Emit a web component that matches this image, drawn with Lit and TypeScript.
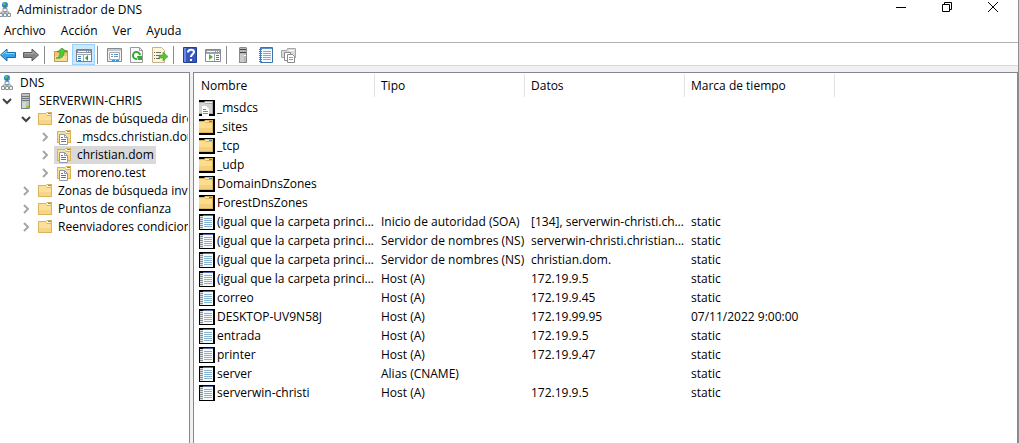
import { LitElement, html, css, svg, nothing } from "lit";
import { customElement } from "lit/decorators.js";
import { classMap } from "lit/directives/class-map.js";

const folderShape = svg`
  <path d="M1 2h8l1-1h5v13H1z" fill="#d9b45e"/>
  <path d="M2 3h7l1 2h4v8H2z" fill="#fbe09a"/>
  <path d="M2 9h12v4H2z" fill="#f6d589"/>
  <path d="M9 2h5v2h-4z" fill="#fff8e4"/>
  <path d="M11 2h3v1h-3z" fill="#4f97d4"/>`;

const icons: Record<string, unknown> = {
  dns: svg`
    <circle cx="8" cy="3" r="3" fill="#2c78c8"/>
    <path d="M6 1l2-1 1 2-2 2-1-1zM9 4l2-2v2l-1 1z" fill="#45c95a"/>
    <path d="M6 6.500h4v3H6zM2.500 11.500h3v3h-3zM6.500 11.500h3v3h-3zM10.500 11.500h3v3h-3z" fill="#f4f6f8" stroke="#8c949c"/>
    <path d="M8 9v2M4 11v-1h8v1" stroke="#8c949c" fill="none"/>`,
  server: svg`
    <path d="M3 1l1-1h8v15l-1 1H3z" fill="#7d8286"/>
    <path d="M4 1h7v14H4z" fill="#bfc3c6"/>
    <path d="M4 3.500h7M4 5.500h7M4 7.500h7" stroke="#74797d"/>
    <path d="M4 9h4v6H4z" fill="#d2d6d8"/>
    <path d="M8 13h3v2H8z" fill="#7ed321"/>`,
  tower: svg`
    <path d="M4 1l1-1h6l1 1v15H4z" fill="#8a8a8a"/>
    <path d="M5 1h6v14H5z" fill="#b8b8b8"/>
    <path d="M5 2h6v1H5zM5 5h6v1H5z" fill="#444"/>
    <path d="M5 7h4v8H5z" fill="#cacaca"/><path d="M9 8h2v1H9z" fill="#fff"/>`,
  folder: folderShape,
  zone: svg`${folderShape}<path d="M3.500 5.500h5l3 3v7h-8z" fill="#fff" stroke="#8c9cac"/><path d="M8.500 5.500v3h3" fill="none" stroke="#8c9cac"/><path d="M5 8.500h2M5 10.500h5M5 12.500h5" stroke="#3d7cc4"/>`,
  rowFolder: svg`<path d="M0 0h16v16H0z" fill="#000"/>
    <path d="M0 2h5l1-1h8v13H0z" fill="#dcb45c"/><path d="M0 3h6l1 1h6v9H0z" fill="#fbdd8d"/>
    <path d="M0 9h13v4H0z" fill="#f4d07c"/><path d="M6 2h7v1H6z" fill="#f8eac4"/><path d="M10 2h3v1h-3z" fill="#398bd0"/>`,
  rowZone: svg`<path d="M0 0h16v16H0z" fill="#000"/>
    <path d="M0 2h5l1-1h8v13H0z" fill="#aaa"/><path d="M0 3h6l1 1h6v9H0z" fill="#d2d2d2"/><path d="M6 2h7v1H6z" fill="#f2f2f2"/>
    <path d="M3 6h4l3 3v7H3z" fill="#fff"/><path d="M4 9.500h3M4 11.500h5M4 13.500h5" stroke="#888"/>`,
  rowRecord: svg`<path d="M0 0h16v16H0z" fill="#000"/><path d="M1 2h13v13H1z" fill="#8b8f96"/>
    <path d="M4 2h10v13H4z" fill="#f6fafc"/><path d="M4 1h10v1H4z" fill="#526bb0"/>
    <path d="M5 4.500h8M5 6.500h8M5 8.500h8M5 10.500h8M5 12.500h8" stroke="#86b3cf"/>
    <path d="M1 2.500h3M1 4.500h3M1 6.500h3M1 8.500h3M1 10.500h3M1 12.500h3M1 14.500h3" stroke="#dcdcdc"/>`,
  back: svg`<path d="M.5 8L7 2v3.500h8.500v5H7V14z" fill="#35a4e8" stroke="#1c6aa6"/><path d="M2 8l4-4v2.500h8.500" fill="none" stroke="#8dd3fa"/>`,
  forward: svg`<path d="M15.500 8L9 2v3.500H.5v5H9V14z" fill="#858585" stroke="#5c5c5c"/><path d="M1.500 6.500H10V4.500l3.500 3.500" fill="none" stroke="#aaa"/>`,
  up: svg`<path d="M1.500 4.500h5l1-1h7v11h-13z" fill="#efc873" stroke="#c39a48"/><path d="M2 9h12v5H2z" fill="#f8dc95"/>
    <path d="M3 11c3 0 4-3 4-6H4l5-4 5 4h-3c0 5-3 7-8 6z" fill="#55c53c" stroke="#2e8f22" stroke-width=".6"/>`,
  treePane: svg`<path d="M.5 2.500h15v12H.5z" fill="#fff" stroke="#77818b"/><path d="M1 3h14v3H1z" fill="#8b949d"/>
    <path d="M2 4.500h8M11 4.500h1M13 4.500h1" stroke="#fff"/><path d="M1 7.500h14M7.500 8v6" stroke="#a1a8af"/>
    <path d="M2 9.500h3M2 11.500h3M2 13.500h3" stroke="#3c79be"/><path d="M12 8v6l-3-3z" fill="#2ea12e"/>`,
  properties: svg`<path d="M1.500 1.500h14v13h-14z" fill="#f4f4f4" stroke="#848a90"/><path d="M2 2h13v2H2z" fill="#c4c9ce"/>
    <path d="M3.500 5.500h10v7h-10z" fill="#fff" stroke="#a4aab0"/><path d="M5 7.500h2M8 7.500h4M5 9.500h2M8 9.500h4" stroke="#6d8fb4"/><path d="M6 13.500h3M10 13.500h3" stroke="#3795d2"/>`,
  refresh: svg`<path d="M1.500 .5h9l3 3v12h-12z" fill="#fafafa" stroke="#9a9a9a"/><path d="M10.500 .5v3h3" fill="none" stroke="#9a9a9a"/>
    <path d="M8 12a3.500 3.500 0 1 1 3-4" fill="none" stroke="#36a834" stroke-width="2"/><path d="M8 9h5v4H9z" fill="#36a834"/>`,
  exportList: svg`<path d="M.5 .5h9l3 3v12H.5z" fill="#fdf6d8" stroke="#c0b48c"/><path d="M2 5.500h1M4 5.500h5M2 8.500h1M4 8.500h3M2 11.500h1M4 11.500h4" stroke="#666"/>
    <path d="M7 8h4V5l5 4.500-5 4.500v-3H7z" fill="#54c335" stroke="#33951f" stroke-width=".5"/>`,
  help: svg`<path d="M1.500 .5h13v15h-13z" fill="#3458c0" stroke="#223d94"/><path d="M2 1h2v14H2z" fill="#6d8be0"/>
    <path d="M6 5.500c0-4 6-3.500 6-.5 0 2-3 2-3 5" fill="none" stroke="#fff" stroke-width="2"/><path d="M8 12h2v2H8z" fill="#fff"/>`,
  actionPane: svg`<path d="M.5 2.500h15v12H.5z" fill="#fff" stroke="#838a91"/><path d="M1 3h14v3H1z" fill="#969ca2"/><path d="M2 4.500h8M11 4.500h1M13 4.500h1" stroke="#fff"/>
    <path d="M9.500 7v7M1 6.500h14" stroke="#a1a8af"/><path d="M11 8.500h3M11 10.500h3M11 12.500h3" stroke="#3c79be"/><path d="M4 7v6l4-3z" fill="#42b92c"/>`,
  notebook: svg`<path d="M2.500 .5h12v15h-12z" fill="#f6fbff" stroke="#3f72ad"/><path d="M3 1h11v1H3z" fill="#5d91cf"/>
    <path d="M5 4.500h8M5 6.500h8M5 8.500h8M5 10.500h8M5 12.500h8" stroke="#7aade0"/>
    <path d="M1 2.500h3M1 4.500h3M1 6.500h3M1 8.500h3M1 10.500h3M1 12.500h3M1 14.500h3" stroke="#777"/>`,
  zones: svg`<path d="M.5 3.500h5l1-2h8v9H.5z" fill="#dadada" stroke="#a6a6a6"/><path d="M8 3.500h5" stroke="#fff"/>
    <path d="M3.500 5.500h6v8h-6z" fill="#fff" stroke="#8a8a8a"/><path d="M6.500 7.500h5l2 2v6h-7z" fill="#fff" stroke="#8a8a8a"/><path d="M8 10.500h4M8 12.500h4" stroke="#999"/>`,
};

const icon = (name: string) =>
  html`<svg class="icon" viewBox="0 0 16 16" aria-hidden="true">${icons[name]}</svg>`;

type Node = { label: string; icon: string; level: number; open?: boolean; root?: boolean; selected?: boolean };
const tree: Node[] = [
  { label: "DNS", icon: "dns", level: 0, root: true },
  { label: "SERVERWIN-CHRIS", icon: "server", level: 0, open: true },
  { label: "Zonas de búsqueda directa", icon: "folder", level: 1, open: true },
  { label: "_msdcs.christian.dom", icon: "zone", level: 2 },
  { label: "christian.dom", icon: "zone", level: 2, selected: true },
  { label: "moreno.test", icon: "zone", level: 2 },
  { label: "Zonas de búsqueda inversa", icon: "folder", level: 1 },
  { label: "Puntos de confianza", icon: "folder", level: 1 },
  { label: "Reenviadores condicionales", icon: "folder", level: 1 },
];

const parent = "(igual que la carpeta principal)";
const records: [string, string, string, string, string][] = [
  ["rowZone", "_msdcs", "", "", ""],
  ["rowFolder", "_sites", "", "", ""],
  ["rowFolder", "_tcp", "", "", ""],
  ["rowFolder", "_udp", "", "", ""],
  ["rowFolder", "DomainDnsZones", "", "", ""],
  ["rowFolder", "ForestDnsZones", "", "", ""],
  ["rowRecord", parent, "Inicio de autoridad (SOA)", "[134], serverwin-christi.christian.dom", "static"],
  ["rowRecord", parent, "Servidor de nombres (NS)", "serverwin-christi.christian.dom.", "static"],
  ["rowRecord", parent, "Servidor de nombres (NS)", "christian.dom.", "static"],
  ["rowRecord", parent, "Host (A)", "172.19.9.5", "static"],
  ["rowRecord", "correo", "Host (A)", "172.19.9.45", "static"],
  ["rowRecord", "DESKTOP-UV9N58J", "Host (A)", "172.19.99.95", "07/11/2022 9:00:00"],
  ["rowRecord", "entrada", "Host (A)", "172.19.9.5", "static"],
  ["rowRecord", "printer", "Host (A)", "172.19.9.47", "static"],
  ["rowRecord", "server", "Alias (CNAME)", "", "static"],
  ["rowRecord", "serverwin-christi", "Host (A)", "172.19.9.5", "static"],
];

const toolGroups = [
  [["back", "Atrás"], ["forward", "Adelante"]],
  [["up", "Subir un nivel"], ["treePane", "Mostrar u ocultar árbol"]],
  [["properties", "Propiedades"], ["refresh", "Actualizar"], ["exportList", "Exportar lista"]],
  [["help", "Ayuda"], ["actionPane", "Panel de acciones"]],
  [["tower", "Nuevo servidor"], ["notebook", "Nuevo registro"], ["zones", "Nueva zona"]],
];

@customElement("app-root")
export class AppRoot extends LitElement {
  static styles = css`
    :host {
      display: flex;
      flex-direction: column;
      box-sizing: border-box;
      height: 100vh;
      overflow: hidden;
      background: #fff;
      border-right: 1px solid #8e8e92;
      color: #000;
      font: 12px/18px "Open Sans", "Noto Sans", sans-serif;
    }
    button {
      border: 0;
      padding: 0;
      background: none;
      font: inherit;
      color: inherit;
    }
    .icon { display: block; width: 16px; height: 16px; flex: none; }
    .titlebar { display: flex; align-items: center; height: 20px; flex: none; padding-right: 2px; }
    .title { flex: 1; margin: 0 0 0 4px; font: inherit; }
    .titlebar > .icon { margin-left: -3px; }
    .caption { width: 46px; height: 20px; display: grid; place-items: start center; padding-top: 2px; }
    .caption svg { width: 10px; height: 10px; fill: none; stroke: #000; }
    .menu { display: flex; gap: 15px; height: 22px; align-items: center; padding-left: 4px; flex: none; }
    .toolbar {
      display: flex;
      align-items: flex-end;
      height: 22px;
      flex: none;
      border-top: 1px solid #b0b0b0;
      border-bottom: 1px solid #d8d8d8;
    }
    .group { display: flex; align-items: center; }
    .group:first-child { margin-left: -4px; }
    .group + .group::before { content: ""; width: 1px; height: 18px; margin: 0 4px 0 2px; background: #8c8c8c; }
    .tool { box-sizing: border-box; width: 23px; height: 21px; display: grid; place-items: center; border: 1px solid transparent; }
    .tool.on { background: #cce8ff; border-color: #99d1ff; }
    .panes {
      flex: 1;
      min-height: 0;
      display: grid;
      grid-template-columns: 190px 1fr;
      gap: 3px;
      padding-top: 6px;
      background: #f0f0f0;
    }
    .pane { background: #fff; border: 1px solid #828790; border-bottom: 0; overflow: hidden; min-width: 0; }
    .pane.left { border-left: 0; }
    .tree { list-style: none; margin: 0 1px 0 0; padding: 1px 0 0; overflow: hidden; }
    .node { display: flex; align-items: center; height: 18px; white-space: nowrap; }
    .node.l1 { padding-left: 19px; }
    .node.l2 { padding-left: 38px; }
    .twisty { flex: none; width: 14px; height: 14px; display: grid; place-items: center; margin-right: 2px; }
    .twisty svg { width: 12px; height: 10px; fill: none; stroke: #a6a6a6; stroke-width: 2; }
    .twisty.open svg { stroke: #404040; }
    .entry { flex: none; display: flex; align-items: center; height: 18px; padding: 0 2px; }
    .entry.root { padding-left: 0; }
    .label { padding-left: 5px; }
    .root .icon { margin-left: -1px; }
    .entry.selected { background: #d9d9d9; }
    .grid { border-collapse: collapse; table-layout: fixed; width: 641px; }
    .c1 { width: 181px; }
    .c2 { width: 150px; }
    .c3 { width: 160px; }
    .c4 { width: 150px; }
    th { height: 25px; padding: 0; font-weight: 400; text-align: left; }
    .head { display: block; height: 23px; line-height: 24px; padding-left: 6px; border-right: 1px solid #e2e2e2; }
    .c1 .head { padding-left: 7px; }
    td { height: 19px; padding: 0 0 0 6px; overflow: hidden; text-overflow: ellipsis; white-space: nowrap; }
    td.name { padding-left: 5px; }
    .cell { display: flex; align-items: center; gap: 2px; }
    .text { overflow: hidden; text-overflow: ellipsis; }
  `;

  render() {
    return html`
      <header class="titlebar">
        ${icon("dns")}
        <h1 class="title">Administrador de DNS</h1>
        <button class="caption" aria-label="Minimizar"><svg viewBox="0 0 10 10"><path d="M0 5.500h10" /></svg></button>
        <button class="caption" aria-label="Restaurar"><svg viewBox="0 0 10 10"><path d="M.5 2.500h7v7h-7zM2.500 2V.5h7v7H8" /></svg></button>
        <button class="caption" aria-label="Cerrar"><svg viewBox="0 0 10 10"><path d="M0 0l10 10M10 0L0 10" /></svg></button>
      </header>
      <nav class="menu">
        ${["Archivo", "Acción", "Ver", "Ayuda"].map((m) => html`<button>${m}</button>`)}
      </nav>
      <div class="toolbar" role="toolbar">
        ${toolGroups.map((g) => html`<div class="group">
          ${g.map(([name, label]) => html`<button
            class=${classMap({ tool: true, on: name === "treePane" })} aria-label=${label}>${icon(name)}</button>`)}
        </div>`)}
      </div>
      <main class="panes">
        <section class="pane left">
          <ul class="tree">${tree.map((n) => this.renderNode(n))}</ul>
        </section>
        <section class="pane">
          <table class="grid">
            <thead>
              <tr>
                ${["Nombre", "Tipo", "Datos", "Marca de tiempo"].map(
                  (h, i) => html`<th class="c${i + 1}"><span class="head">${h}</span></th>`)}
              </tr>
            </thead>
            <tbody>
              ${records.map(([ic, name, ...rest]) => html`<tr>
                <td class="name"><div class="cell">${icon(ic)}<span class="text">${name}</span></div></td>
                ${rest.map((c) => html`<td>${c}</td>`)}
              </tr>`)}
            </tbody>
          </table>
        </section>
      </main>
    `;
  }

  private renderNode(n: Node) {
    const path = n.open ? "M2 3l4 4 4-4" : "M4 1l4 4-4 4";
    return html`<li class="node l${n.level}">
      ${n.root ? nothing : html`<button class=${classMap({ twisty: true, open: !!n.open })}
        aria-label=${n.open ? "Contraer" : "Expandir"}><svg viewBox="0 0 12 10"><path d=${path} /></svg></button>`}
      <span class=${classMap({ entry: true, root: !!n.root, selected: !!n.selected })}>
        ${icon(n.icon)}<span class="label">${n.label}</span>
      </span>
    </li>`;
  }
}
